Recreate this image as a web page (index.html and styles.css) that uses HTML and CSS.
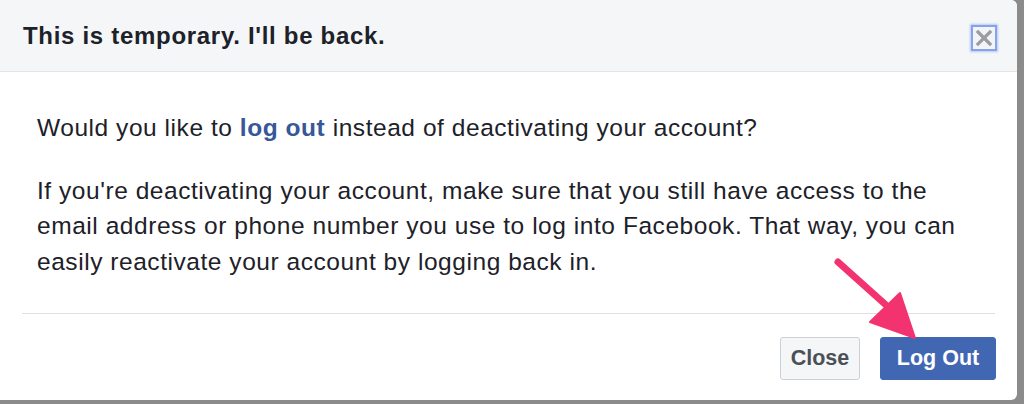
FILE: index.html
```html
<!DOCTYPE html>
<html>
<head>
<meta charset="utf-8">
<link rel="stylesheet" href="styles.css">
</head>
<body>
<div class="dialog">
  <div class="header">
    <h2 class="title">This is temporary. I'll be back.</h2>
    <button class="x-btn" aria-label="Close">
      <svg width="18" height="18" viewBox="0 0 18 18"><path d="M3 3 L15 15 M15 3 L3 15" stroke="#9a9ca0" stroke-width="3.2" stroke-linecap="square"/></svg>
    </button>
  </div>
  <div class="body">
    <p class="q">Would you like to <a class="link">log out</a> instead of deactivating your account?</p>
    <p class="info">If you're deactivating your account, make sure that you still have access to the<br>email address or phone number you use to log into Facebook. That way, you can<br>easily reactivate your account by logging back in.</p>
  </div>
  <div class="footer">
    <button class="btn btn-close">Close</button>
    <button class="btn btn-primary">Log Out</button>
  </div>
  <svg class="arrow" width="110" height="100" viewBox="0 0 110 100">
    <path d="M16 14 L64 57" stroke="#f2336f" stroke-width="7" stroke-linecap="round"/>
    <path d="M48 74 L78 45 L93 90 Z" fill="#f2336f" stroke="#f2336f" stroke-width="2" stroke-linejoin="round"/>
  </svg>
</div>
</body>
</html>
```
FILE: styles.css
```css
html, body {
  margin: 0;
  padding: 0;
  background: #8b8b8b;
  width: 1024px;
  height: 404px;
  overflow: hidden;
}
body {
  font-family: "Liberation Sans", Arial, Helvetica, sans-serif;
  color: #1d2129;
}
.dialog {
  position: relative;
  width: 1017px;
  height: 400px;
  background: #fff;
  border-radius: 0 6px 6px 0;
  display: flex;
  flex-direction: column;
}
.header {
  height: 72px;
  box-sizing: border-box;
  background: #f5f6f7;
  border-bottom: 1px solid #e5e5e5;
  display: flex;
  align-items: center;
  justify-content: space-between;
  padding: 0 20px 0 23px;
  border-radius: 0 6px 0 0;
}
.title {
  margin: 0;
  font-size: 24px;
  letter-spacing: 0.7px;
  font-weight: bold;
  color: #1d2129;
}
.x-btn {
  width: 26px;
  height: 26px;
  padding: 0;
  margin-top: 4px;
  border: 2px solid #86a3ea;
  box-shadow: 0 0 2px 1px #b5c8f3;
  background: #f2f4f8;
  display: flex;
  align-items: center;
  justify-content: center;
}
.body {
  font-size: 24.5px;
  letter-spacing: 0.55px;
  line-height: 35.5px;
  height: 242px;
  box-sizing: border-box;
  border-bottom: 1px solid #dddfe2;
  margin: 0 22px;
  padding: 38px 0 0 15px;
  white-space: nowrap;
}
.q {
  margin: 0 0 27px 0;
}
.info {
  margin: 0;
}
.link {
  color: #365899;
  font-weight: bold;
}
.footer {
  display: flex;
  justify-content: flex-end;
  gap: 20px;
  padding: 23px 21px 0 0;
}
.btn {
  height: 43px;
  font-family: "Liberation Sans", Arial, Helvetica, sans-serif;
  font-size: 21.5px;
  font-weight: bold;
  border-radius: 3px;
  padding: 0;
}
.btn-close {
  width: 80px;
  background: #f5f6f7;
  border: 1px solid #ccd0d5;
  color: #4b4f56;
}
.btn-primary {
  width: 116px;
  background: #4267b2;
  border: 1px solid #4267b2;
  color: #fff;
}
.arrow {
  position: absolute;
  left: 822px;
  top: 248px;
}
```
